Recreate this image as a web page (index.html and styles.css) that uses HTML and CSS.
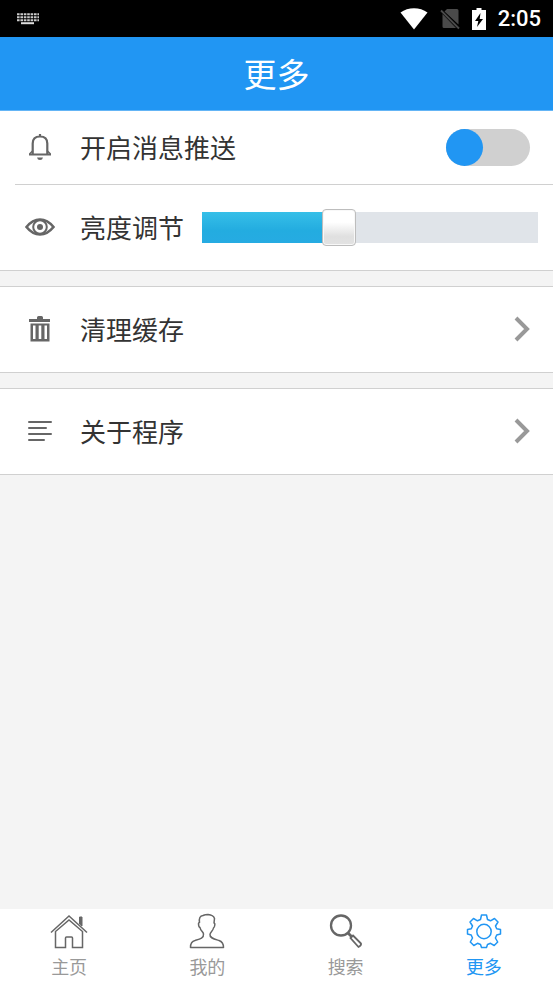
FILE: index.html
```html
<!DOCTYPE html>
<html lang="zh-CN">
<head>
<meta charset="utf-8">
<meta name="viewport" content="width=device-width, initial-scale=1">
<title>更多</title>
<link rel="stylesheet" href="styles.css">
</head>
<body>
<div class="status">
  <svg class="keyboard" width="22" height="12" viewBox="0 0 22 12" aria-hidden="true">
    <path d="M0 1.2h22M0 4.2h22M0 7.2h22" stroke="#ccc" stroke-width="2" stroke-dasharray="2.6 .8"/>
    <path d="M4 10.2h13" stroke="#ddd" stroke-width="2"/>
  </svg>
  <div class="status-icons">
    <svg width="28" height="22" viewBox="0 0 28 22" aria-hidden="true"><path d="M.5 4.500C8-1.200 20-1.200 27.500 4.500L14 21.500z" fill="#fff"/></svg>
    <svg width="20" height="22" viewBox="0 0 20 22" aria-hidden="true"><path d="M7 1h10q1.500 0 1.500 1.500v14L4.500 3.500zM2.500 6L16 20H4q-1.500 0-1.500-1.500z" fill="#4a4a4a"/><path d="M1 2.500l18 18" stroke="#4a4a4a" stroke-width="1.800"/></svg>
    <svg width="14" height="22" viewBox="0 0 14 22" aria-hidden="true"><path d="M4.500 0h5v2H14v20H0V2h4.500z" fill="#fff"/><path d="M8.500 5L3 13h3.300L5 19l6-8H7.700z" fill="#000"/></svg>
    <span class="clock">2:05</span>
  </div>
</div>
<header class="header"><h1>更多</h1></header>
<main class="main">
  <section class="group">
    <div class="row row-switch">
      <svg class="icon" viewBox="0 0 30 30" aria-hidden="true" fill="none" stroke="#666" stroke-width="2.200">
        <path d="M4 22.500h22M7.700 22V11.500C7.700 7 10 4.500 15 4.500s7.300 2.500 7.300 7V22M15 2v2.500"/><path d="M12 25.500h6q-.5 2.500-3 2.500t-3-2.500z" fill="#666" stroke="none"/><path d="M4.500 22l3.500-3.500M25.500 22L22 18.500" stroke-width="1.500"/>
      </svg>
      <label class="label" for="push">开启消息推送</label>
      <input class="switch" id="push" type="checkbox" role="switch">
    </div>
    <div class="row row-slider">
      <svg class="icon" viewBox="0 0 30 30" aria-hidden="true" fill="none" stroke="#666" stroke-width="2.600">
        <path d="M1.500 15Q7.500 7.500 15 7.500t13.500 7.500Q22.500 22.500 15 22.500T1.500 15z"/><circle cx="15" cy="15" r="6.800" stroke-width="2"/><circle cx="15" cy="15" r="3" fill="#666" stroke="none"/>
      </svg>
      <label class="label" for="brightness">亮度调节</label>
      <input class="slider" id="brightness" type="range" min="0" max="255" value="101">
    </div>
  </section>
  <section class="group">
    <a class="row" href="#cache">
      <svg class="icon" viewBox="0 0 30 30" aria-hidden="true" fill="#666">
        <path d="M4 5h8V3.500Q12 2 13.500 2h3Q18 2 18 3.500V5h7v3H4z"/><path fill-rule="evenodd" d="M5.500 9.500h19V27.500h-19zM8 11.500v13.500h2.500V11.500zM13.700 11.500v13.500h2.600V11.500zM19.500 11.500v13.500H22V11.500z"/>
      </svg>
      <span class="label">清理缓存</span>
      <svg class="chevron" viewBox="0 0 16 26" aria-hidden="true"><path d="M2 2l11 11L2 24" fill="none" stroke="#999" stroke-width="4"/></svg>
    </a>
  </section>
  <section class="group">
    <a class="row" href="#about">
      <svg class="icon" viewBox="0 0 30 30" aria-hidden="true"><path d="M4 6h22M4 12h17M4 18h22M4 24h15" stroke="#666" stroke-width="2" stroke-linecap="round"/></svg>
      <span class="label">关于程序</span>
      <svg class="chevron" viewBox="0 0 16 26" aria-hidden="true"><path d="M2 2l11 11L2 24" fill="none" stroke="#999" stroke-width="4"/></svg>
    </a>
  </section>
</main>
<nav class="tabs">
  <a class="tab" href="#home">
    <svg class="tab-icon" viewBox="0 0 38 36" aria-hidden="true" fill="none" stroke="#666" stroke-width="1.500">
      <path d="M1 19.500L19 3l18 16.500M5.500 18.500V34.500h10V25q0-1 1-1h5q1 0 1 1v9.500h10v-16L19 7z"/><path d="M29.500 4v7l2.500 2V4z" fill="#666" stroke-width="1"/>
    </svg>
    <span>主页</span>
  </a>
  <a class="tab" href="#mine">
    <svg class="tab-icon" viewBox="0 0 38 36" aria-hidden="true" fill="none" stroke="#666" stroke-width="1.500" stroke-linejoin="round">
      <path d="M2.500 34.500Q2.500 28.500 7 27.500C12 26 16 25 15.500 21C15.500 19 12.500 18 12 14.500Q10.500 14 10.500 10.500Q10.500 9.500 11.500 9.500Q10.500 3 15 2.500Q17 1.500 20 1.500Q25.500 2 26.500 5.500L26 10Q27 10 26.800 12Q26.500 14.500 25.500 15C25 18 22 19 22 21.500C21.500 25 26 26 31 27.500Q35.500 29 35.500 34.500z"/>
    </svg>
    <span>我的</span>
  </a>
  <a class="tab" href="#search">
    <svg class="tab-icon" viewBox="0 0 38 36" aria-hidden="true" fill="none" stroke="#666">
      <circle cx="14" cy="12.500" r="10" stroke-width="2.300"/><path d="M20.500 19.500l4 4" stroke-width="2.800"/><path d="M26 22.500l8 8q.5 2-2.500 3.500l-8-9z" stroke-width="1.800"/>
    </svg>
    <span>搜索</span>
  </a>
  <a class="tab active" href="#more" aria-current="page">
    <svg class="tab-icon" viewBox="0 0 38 36" aria-hidden="true" fill="none" stroke="#2196f3" stroke-width="1.500" stroke-linejoin="round">
      <path d="M16.500 2h5l1 4.500 3 1.300L29.500 5.500l3.500 3.500-2.500 4 1.200 2.800 3.800.7v4.500l-3.800 1-1.300 3 2.300 4-3.500 3.500-3.700-2.200-3 1.200-1 3h-5l-1-3-3-1.200L8.800 32.500l-3.500-3.500L7.500 25l-1.300-3L2.500 21v-4.500l3.800-.7 1.200-2.800L5 9l3.500-3.500 4 2.300 3-1.300z"/><circle cx="19" cy="18.500" r="7.200"/>
    </svg>
    <span>更多</span>
  </a>
</nav>
</body>
</html>
```
FILE: styles.css
```css
* { box-sizing: border-box; }

body {
  margin: 0;
  min-height: 100vh;
  display: flex;
  flex-direction: column;
  background: #f4f4f4;
  color: #333;
  font-family: "Noto Sans CJK SC", sans-serif;
}

a { color: inherit; text-decoration: none; }

.status {
  display: flex;
  align-items: center;
  justify-content: space-between;
  height: 37px;
  padding: 0 12px 0 17px;
  background: #000;
  color: #fff;
}

.status-icons { display: flex; align-items: center; gap: 12px; }

.clock { font: 500 22px/36px Roboto, sans-serif; }

.header {
  height: 74px;
  background: #2196f3;
  border-bottom: 1px solid #64b5f6;
  color: #fff;
}

.header h1 {
  margin: 0;
  font-size: 33px;
  font-weight: 400;
  line-height: 72px;
  text-align: center;
}

.main {
  flex: 1;
  display: flex;
  flex-direction: column;
  gap: 15px;
}

.group {
  background: #fff;
  border-top: 1px solid #d0d0d0;
  border-bottom: 1px solid #d0d0d0;
}

.group:first-child { border-top: 0; }

.row {
  display: flex;
  align-items: center;
  height: 85px;
  padding: 0 23px 2px 25px;
}

.row-switch {
  height: 74px;
  background: linear-gradient(#d0d0d0, #d0d0d0) 15px 100% / 100% 1px no-repeat;
}

.row-slider { padding-right: 15px; }

.icon { width: 30px; height: 30px; margin-right: 25px; flex: none; }

.label { font-size: 26px; line-height: 38px; flex: none; }

.chevron { width: 16px; height: 26px; margin-left: auto; }

.switch {
  appearance: none;
  width: 84px;
  height: 37px;
  margin: 0 0 0 auto;
  border-radius: 20px;
  background: #d0d0d0;
}

.switch::before {
  content: "";
  display: block;
  width: 37px;
  height: 37px;
  border-radius: 50%;
  background: #2196f3;
}

.switch:checked::before { margin-left: auto; }

.slider {
  appearance: none;
  flex: 1;
  min-width: 0;
  height: 37px;
  margin: 2px 0 0 18px;
  background: transparent;
}

.slider::-webkit-slider-runnable-track {
  height: 31px;
  background:
    linear-gradient(#36bfe8, #23ace0 60%, #26abe2) 0 0 / 40% 100% no-repeat,
    #e0e4e9;
}

.slider::-webkit-slider-thumb {
  appearance: none;
  width: 34px;
  height: 37px;
  margin-top: -3px;
  border: 1px solid #bdbdbd;
  border-radius: 4px;
  background: linear-gradient(#fff 35%, #e0e0e0 75%, #e2e2e2);
  box-shadow: inset 0 0 0 1px #f8f8f8;
}

.tabs {
  display: grid;
  grid-template-columns: repeat(4, 1fr);
  height: 74px;
  background: #fff;
}

.tab {
  display: flex;
  flex-direction: column;
  align-items: center;
  padding-top: 4px;
  color: #999;
  font-size: 18px;
  line-height: 34px;
}

.tab-icon { width: 38px; height: 36px; flex: none; }

.active { color: #2196f3; }
```
